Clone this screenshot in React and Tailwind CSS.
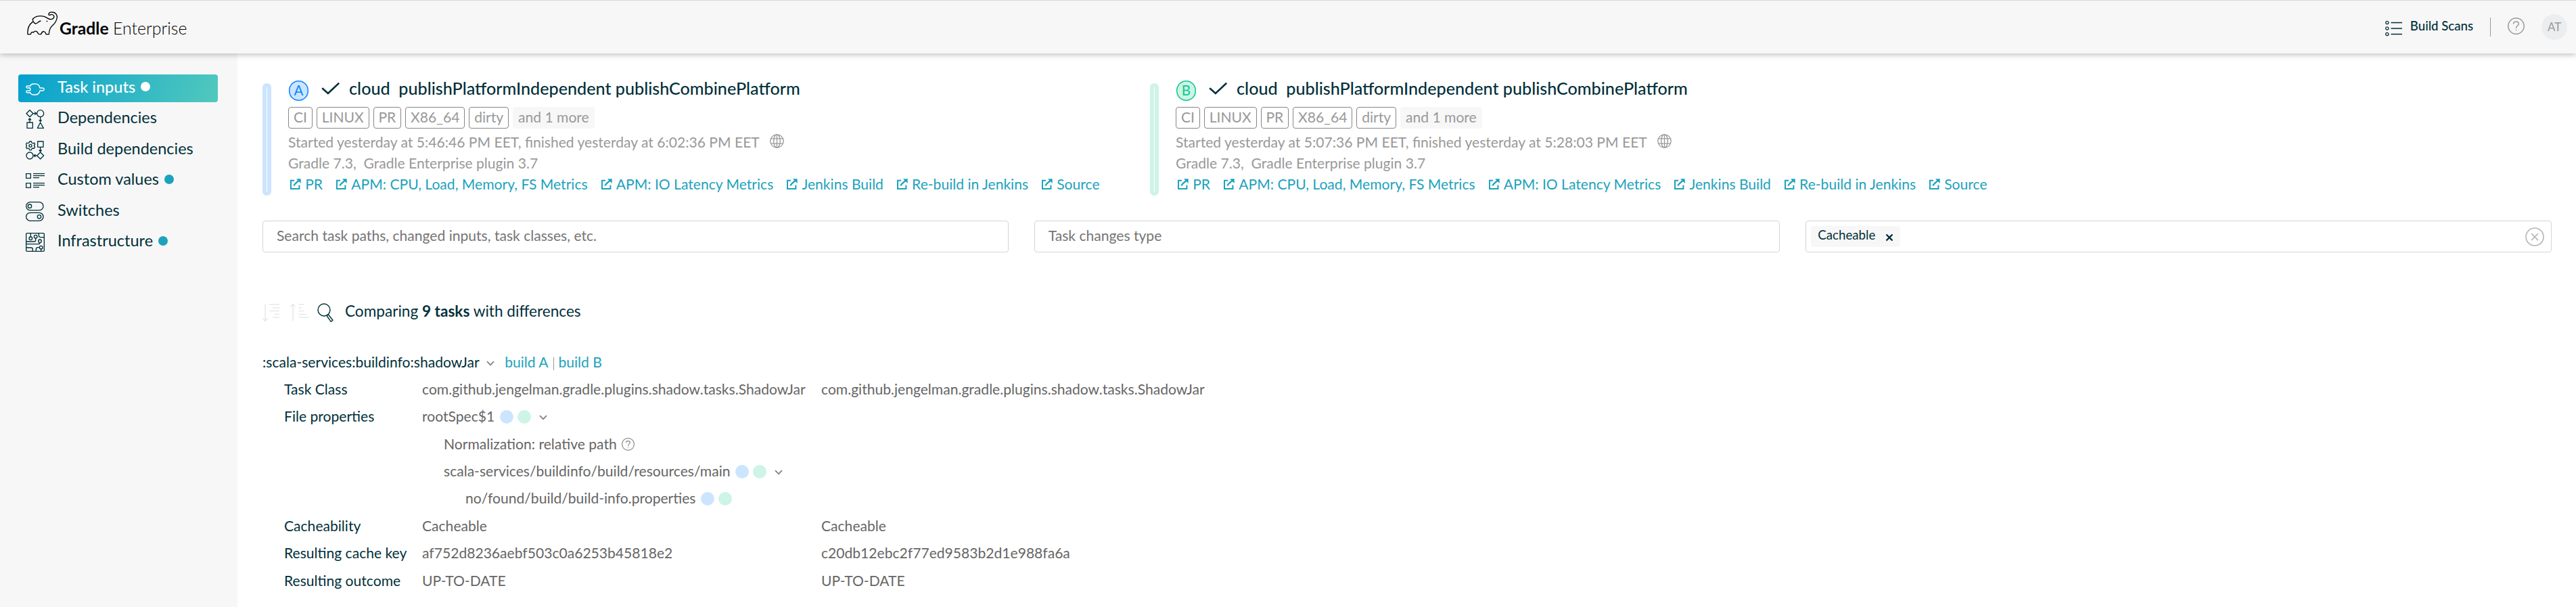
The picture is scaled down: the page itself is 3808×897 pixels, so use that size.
import React from 'react';

/* ---------- icons ---------- */

const Elephant = () => (
  <svg className="w-[45px] h-[35px] shrink-0" viewBox="0 0 135 105" fill="none" stroke="#000" strokeWidth="4" strokeLinecap="round" strokeLinejoin="round">
    <path d="M26 33C38 18 62 18 78 23C89 27 95 35 106 35C118 34 123 24 117 17C112 11 105 13 103 15C99 18 95 15 96 11C98 5 105 2 113 3C127 4 134 15 133 27C131 45 120 56 111 64C101 73 98 84 97 101H84C81 85 67 85 64 98Q57 104 49 98C46 85 32 85 29 93Q20 87 16 101H3C1 78 8 58 25 46" />
    <path d="M25 33C24 42 31 52 38 54C46 54 52 42 60 42" />
    <circle cx="88" cy="43" r="1.6" fill="#000" strokeWidth="2" />
  </svg>
);

const sideSvg = 'w-7 shrink-0';
const stroke = { fill: 'none', stroke: 'currentColor', strokeWidth: 4, strokeLinejoin: 'round', strokeLinecap: 'round' };

const PlugIcon = () => (
  <svg className={`${sideSvg} h-[18px] mt-0.5`} viewBox="0 0 84 54" {...stroke}>
    <path d="M20 12C23 5 28 3 34 3H43C55 3 61 11 63 21H76Q82 22 82 27T76 33H63C61 43 55 51 43 51H34C28 51 23 49 20 42" />
    <path d="M20 12H7a4.500 4.500 0 0 0 0 9H20V33H7a4.500 4.500 0 0 0 0 9H20" />
  </svg>
);
const DependenciesIcon = () => (
  <svg className={`${sideSvg} h-7`} viewBox="0 0 84 84" {...stroke}>
    <path d="M18 2L33 17L18 32L3 17ZM6 57H31V82H6ZM65 57L79 82H52Z" />
    <circle cx="65" cy="17" r="15" />
    <path d="M34 17H46M41 12L47 17L41 22M18 56V41M13 45L18 39L23 45M65 33V50M60 47L65 53L70 47" />
  </svg>
);
const BuildDependenciesIcon = () => (
  <svg className={`${sideSvg} h-7`} viewBox="0 0 84 84" {...stroke}>
    <path d="M17 3H25L27 9L33 12L38 9L41 16L37 21L41 28L37 34L31 33L27 36L25 41H17L15 35L10 33L5 35L1 28L5 22L1 15L5 9L10 11L15 9Z" />
    <circle cx="21" cy="22" r="6" />
    <path d="M53 3H78V28H53ZM65 51L80 66L65 81L50 66Z" />
    <circle cx="18" cy="66" r="15" />
    <path d="M65 28V46M60 42L65 48L70 42M49 66H37M42 61L36 66L42 71" />
  </svg>
);
const CustomValuesIcon = () => (
  <svg className={`${sideSvg} h-7`} viewBox="0 0 84 84" fill="none" stroke="currentColor" strokeWidth="4" strokeLinejoin="round">
    <path d="M2 11H22V31H2ZM2 53H22V73H2Z" />
    <path d="M33 11H84M33 20H84M33 29H60M33 53H84M33 62H84M33 71H60" />
  </svg>
);
const SwitchesIcon = () => (
  <svg className={`${sideSvg} h-[29px]`} viewBox="0 0 84 87" {...stroke}>
    <rect x="2" y="2" width="76" height="36" rx="18" />
    <circle cx="18" cy="20" r="8" />
    <rect x="2" y="49" width="76" height="36" rx="18" />
    <circle cx="60" cy="67" r="8" />
  </svg>
);
const InfrastructureIcon = () => (
  <svg className={`${sideSvg} h-7`} viewBox="0 0 84 84" {...stroke}>
    <rect x="2" y="2" width="80" height="80" rx="4" />
    <circle cx="22" cy="25" r="7" />
    <circle cx="44" cy="17" r="7" />
    <circle cx="63" cy="37" r="7" />
    <circle cx="68" cy="65" r="7" />
    <path d="M22 3V17M2 39H38Q44 39 44 33V25M63 44Q63 50 56 50H2M58 3V12Q58 20 66 20H82M2 66H24Q31 66 31 74V82M46 82V72Q46 65 54 65H61M68 72V82" />
  </svg>
);

const CheckIcon = () => (
  <svg className="ml-[19px] w-[27px] h-5 shrink-0" viewBox="0 0 27 20" fill="none" stroke="#02303a" strokeWidth="2.600">
    <path d="M1.200 10.200L9.900 18L26.200 2.600" />
  </svg>
);
const LinkIcon = () => (
  <svg className="mt-[1.500px] w-4 h-4 shrink-0" viewBox="0 0 16 16" fill="none" stroke="currentColor" strokeWidth="2">
    <path d="M6 2.800H1V15H13.400V9.500" />
    <path d="M5.500 10.500C6 8 9 6 12.500 3" strokeWidth="2.400" />
    <path d="M9 0.300H15.700V7Z" fill="currentColor" stroke="none" />
  </svg>
);
const GlobeIcon = () => (
  <svg className="ml-[15.500px] w-[21px] h-[21px] -mt-0.5" viewBox="0 0 21 21" fill="none" stroke="#999" strokeWidth="1.3">
    <circle cx="10.500" cy="10.500" r="9.700" />
    <ellipse cx="10.500" cy="10.500" rx="4.800" ry="9.700" />
    <path d="M10.500 1V20M1.800 6.800H19.200M1.800 14.200H19.200" />
  </svg>
);
const Chevron = ({ className }) => (
  <svg className={`w-3 h-2 shrink-0 ${className}`} viewBox="0 0 12 8" fill="none" stroke="#868686" strokeWidth="1.900">
    <path d="M1 1.200L6 6.400L11 1.200" />
  </svg>
);
const HelpIcon = ({ className, color }) => (
  <svg className={`shrink-0 ${className}`} viewBox="0 0 25 25" fill="none" stroke={color} strokeWidth="1.500" strokeLinecap="round">
    <circle cx="12.500" cy="12.500" r="11.700" />
    <path d="M8.600 9C8.700 5 16.300 5 16.300 9.300C16.300 12 12.600 12 12.600 15.200M12.600 18.300V18.500" />
  </svg>
);

/* ---------- data ---------- */

const nav = [
  { label: 'Task inputs', Icon: PlugIcon, dot: true, active: true },
  { label: 'Dependencies', Icon: DependenciesIcon },
  { label: 'Build dependencies', Icon: BuildDependenciesIcon },
  { label: 'Custom values', Icon: CustomValuesIcon, dot: true },
  { label: 'Switches', Icon: SwitchesIcon },
  { label: 'Infrastructure', Icon: InfrastructureIcon, dot: true },
];
const tags = ['CI', 'LINUX', 'PR', 'X86_64', 'dirty'];
const links = ['PR', 'APM: CPU, Load, Memory, FS Metrics', 'APM: IO Latency Metrics', 'Jenkins Build', 'Re-build in Jenkins', 'Source'];

/* ---------- parts ---------- */

const Header = () => (
  <header className="relative z-10 flex h-[79px] items-center border-t border-[#d8d8d8] bg-[#f7f7f7] pl-10 pr-[13px] shadow-[0_2px_8px_rgba(0,0,0,0.25)]">
    <div className="flex items-center pb-[11px]">
      <Elephant />
      <div className="ml-[3px] mt-[14px] text-[24.700px] leading-[30px] text-black">
        <span className="font-bold">Gradle</span> <span className="text-[24.900px] font-light">Enterprise</span>
      </div>
    </div>
    <div className="ml-auto flex items-center">
      <svg className="mt-[3px] w-[26px] h-6" viewBox="0 0 26 24" fill="none" stroke="#02303a" strokeWidth="1.300">
        <circle cx="2.800" cy="3.500" r="2.100" />
        <circle cx="2.800" cy="12" r="2.100" />
        <circle cx="2.800" cy="20.500" r="2.100" />
        <path d="M8.500 3.500H25M8.500 12H25M8.500 20.500H25" />
      </svg>
      <span className="ml-[11px] pb-[3px] text-[18.600px] font-medium text-[#02303a]">Build Scans</span>
      <span className="ml-[25px] h-7 w-px bg-[#999]" />
      <HelpIcon className="ml-[25px] mb-1 w-[25px] h-[25px]" color="#999" />
      <span className="ml-[25px] flex h-[38px] w-[38px] items-center justify-center rounded-full bg-[#ebedef] text-[16.800px] text-[#999]">AT</span>
    </div>
  </header>
);

const Sidebar = () => (
  <aside className="w-[351px] shrink-0 bg-[#f7f7f7] pt-[31px] pl-[27px]">
    <nav className="flex flex-col gap-[4.500px]">
      {nav.map(({ label, Icon, dot, active }) => (
        <a
          key={label}
          className={`flex h-[41px] w-[295px] items-center rounded pl-[11px] ${active ? 'bg-linear-[110deg] from-[#06a0ce] to-[#51c9bd] font-medium text-white' : 'text-[#02303a]'}`}
        >
          <Icon />
          <span className="ml-[19px] pb-[6px] text-[23.500px] leading-[30px]">{label}</span>
          {dot && <span className={`ml-2 mb-[5px] h-3.5 w-3.5 rounded-full ${active ? 'bg-white' : 'bg-[#1da2bd]'}`} />}
        </a>
      ))}
    </nav>
  </aside>
);

const Build = ({ letter, bar, badge, started, finished }) => (
  <section className="flex">
    <div className={`mt-[9px] h-[166px] w-[13px] shrink-0 rounded-md border-6 bg-white ${bar}`} />
    <div className="ml-[25px]">
      <div className="flex h-8 items-center">
        <span className={`ml-[0.600px] mt-[7.500px] flex h-[29.500px] w-[29.500px] shrink-0 items-center justify-center rounded-full pb-0.5 text-[20.500px] leading-none ${badge}`}>{letter}</span>
        <CheckIcon />
        <h2 className="ml-[14px] whitespace-pre text-[25.150px] leading-8 font-medium text-[#02303a]">
          cloud{'  '}publishPlatformIndependent publishCombinePlatform
        </h2>
      </div>
      <div className="mt-3 flex h-8 gap-1.5">
        {tags.map((t) => (
          <span key={t} className="rounded border border-[#868686] px-[6.900px] leading-[27.500px]">{t}</span>
        ))}
        <span className="rounded bg-[#f7f7f7] px-2 leading-[29.500px]">and 1 more</span>
      </div>
      <div className="mt-[4.300px] flex h-[31.200px] items-center">
        Started yesterday at {started} PM EET, finished yesterday at {finished} PM EET
        <GlobeIcon />
      </div>
      <div className="h-[31.200px] whitespace-pre leading-[31.200px]">Gradle 7.3,{'  '}Gradle Enterprise plugin 3.7</div>
      <div className="-mt-px flex h-[31.200px] items-center gap-5 pl-[3px] text-[#1da2bd]">
        {links.map((l) => (
          <a key={l} className="flex items-center gap-[6.200px]"><LinkIcon />{l}</a>
        ))}
      </div>
    </div>
  </section>
);

const field = 'flex h-[47px] items-center rounded border border-[#d3d5d7] bg-white text-[#757575]';

const Filters = () => (
  <div className="mt-[37.300px] grid grid-cols-3 gap-[38px]">
    <div className={`${field} pl-5`}><span className="pb-[5px]">Search task paths, changed inputs, task classes, etc.</span></div>
    <div className={`${field} pl-5`}><span className="pb-[5px]">Task changes type</span></div>
    <div className={`${field} justify-between pl-[7px] pr-[10px]`}>
      <span className="flex h-[31px] w-[132px] items-center rounded bg-[#f7f7f7] pl-2.5 text-[18.700px] text-[#02303a]">
        <span className="pb-[5px]">Cacheable</span>
        <svg className="ml-[15px] mt-0.5 h-3 w-3" viewBox="0 0 12 12" fill="none" stroke="#02303a" strokeWidth="2.300">
          <path d="M1.500 1.500L10.500 10.500M10.500 1.500L1.500 10.500" />
        </svg>
      </span>
      <svg className="h-7 w-7" viewBox="0 0 28 28" fill="none" stroke="#b8b8b8" strokeWidth="1.700">
        <circle cx="14" cy="14" r="13" />
        <path d="M9 9.200L19 19.200M19 9.200L9 19.200" />
      </svg>
    </div>
  </div>
);

const Dots = () => (
  <span className="ml-[7.500px] mt-[3px] flex gap-1.5">
    <span className="h-5 w-5 rounded-full bg-[#cce5ff]" />
    <span className="h-5 w-5 rounded-full bg-[#cdf4e7]" />
  </span>
);

const Row = ({ label, a, b, children }) => (
  <div className="grid h-[40.350px] grid-cols-[204px_590px_1fr] items-center">
    <span className="text-[#02303a]">{label}</span>
    {children || <span>{a}</span>}
    <span>{b}</span>
  </div>
);

const Summary = () => (
  <div className="mt-[66px] flex h-10 items-center text-[22.600px] text-[#02303a]">
    <svg className="mt-[5px] h-7 w-[25px]" viewBox="0 0 25 28" fill="none" stroke="#e8e8e8" strokeWidth="1.500">
      <path d="M4 1V26M0.500 22.500L4 26.500L7.500 22.500M10 2H25M15 7H25M10 11.500H25M18 16.500H25M15 21H25" />
    </svg>
    <svg className="ml-4 mt-[5px] h-7 w-7" viewBox="0 0 28 28" fill="none" stroke="#e8e8e8" strokeWidth="1.500">
      <path d="M4 26V1.500M0.500 5.500L4 1.500L7.500 5.500M12.500 2H20.500M12.500 7H17M12.500 11.500H20.500M12.500 16.500H24M12.500 21H28" />
    </svg>
    <svg className="ml-3 mt-[5px] h-7 w-6" viewBox="0 0 24 28" fill="none" stroke="#02303a" strokeWidth="1.400" strokeLinejoin="round">
      <circle cx="10" cy="10" r="9" />
      <path d="M14 18.500L16.500 17L23 25.300L20.300 27.300Z" />
    </svg>
    <span className="ml-[17px]">Comparing <b className="font-bold">9 tasks</b> with differences</span>
  </div>
);

const Details = () => (
  <div className="mt-[34.800px] text-[#666]">
    <div className="flex h-[40.350px] items-center">
      <span className="text-[#02303a]">:scala-services:buildinfo:shadowJar</span>
      <Chevron className="ml-[10.500px] mt-[5px]" />
      <span className="ml-[15px] text-[#1da2bd]">build A</span>
      <span className="mx-[7px] mt-1.5 h-[19px] w-px bg-[#999]" />
      <span className="text-[#1da2bd]">build B</span>
    </div>
    <div className="pl-8">
      <Row label="Task Class" a="com.github.jengelman.gradle.plugins.shadow.tasks.ShadowJar" b="com.github.jengelman.gradle.plugins.shadow.tasks.ShadowJar" />
      <Row label="File properties">
        <span className="flex items-center">rootSpec$1<Dots /><Chevron className="ml-3 mt-1" /></span>
      </Row>
      <Row>
        <span className="flex items-center pl-8">Normalization: relative path<HelpIcon className="ml-[7px] mt-0.5 h-[19px] w-[19px]" color="#868686" /></span>
      </Row>
      <Row>
        <span className="flex items-center pl-8">scala-services/buildinfo/build/resources/main<Dots /><Chevron className="ml-3 mt-1" /></span>
      </Row>
      <Row>
        <span className="flex items-center pl-16">no/found/build/build-info.properties<Dots /></span>
      </Row>
      <Row label="Cacheability" a="Cacheable" b="Cacheable" />
      <Row label="Resulting cache key" a="af752d8236aebf503c0a6253b45818e2" b="c20db12ebc2f77ed9583b2d1e988fa6a" />
      <Row label="Resulting outcome" a="UP-TO-DATE" b="UP-TO-DATE" />
    </div>
  </div>
);

export default function App() {
  return (
    <div className="flex h-[897px] w-[3808px] flex-col overflow-hidden bg-white font-['Lato',sans-serif]">
      <Header />
      <div className="flex flex-1">
        <Sidebar />
        <main className="flex-1 pl-[37px] pr-9 pt-[35px] text-[21.090px] leading-[31px] text-[#999]">
          <div className="grid grid-cols-[1312px_1fr]">
            <Build letter="A" bar="border-[#cce5ff]" badge="shadow-[inset_0_0_0_1.500px_#0a85ff] bg-[#cce5ff] text-[#0a85ff]" started="5:46:46" finished="6:02:36" />
            <Build letter="B" bar="border-[#cdf4e7]" badge="shadow-[inset_0_0_0_1.500px_#0bc98a] bg-[#cdf4e7] text-[#0bc98a]" started="5:07:36" finished="5:28:03" />
          </div>
          <Filters />
          <Summary />
          <Details />
        </main>
      </div>
    </div>
  );
}
